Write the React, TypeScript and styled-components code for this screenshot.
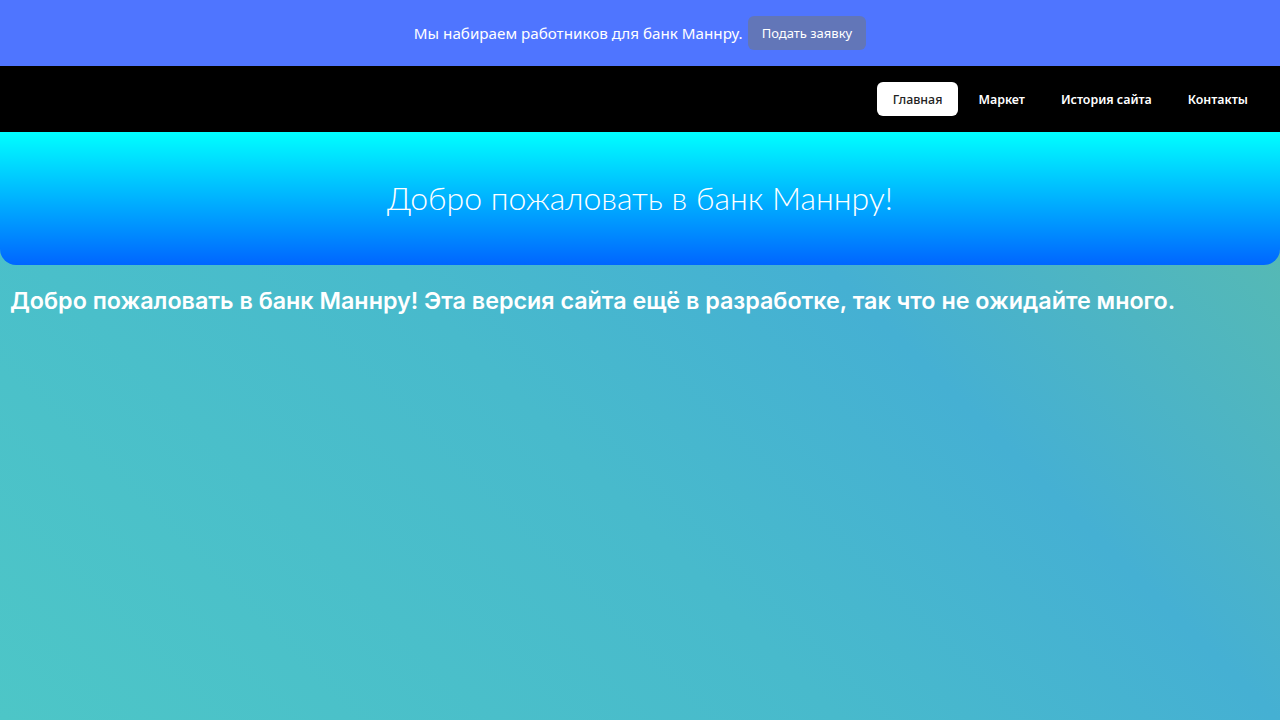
import React from "react";
import styled, { createGlobalStyle } from "styled-components";

const GlobalStyle = createGlobalStyle`
  html, body {
    margin: 0;
    padding: 0;
  }
  body {
    min-height: 100vh;
    font-family: "Noto Sans", "Open Sans", sans-serif;
    background: linear-gradient(225deg, #5ebea4 0%, #45b0d3 36%, #48bacc 58%, #4dc6c7 100%);
    background-attachment: fixed;
  }
`;

const Page = styled.div`
  display: flex;
  flex-direction: column;
  min-height: 100vh;
`;

const Banner = styled.div`
  height: 66px;
  background: #4f75ff;
  display: flex;
  align-items: center;
  justify-content: center;
  gap: 5px;
`;

const BannerText = styled.span`
  color: #ffffff;
  font-family: "Noto Sans", "Open Sans", sans-serif;
  font-size: 15.2px;
`;

const ApplyButton = styled.button`
  height: 34px;
  padding: 0 14px;
  border: none;
  border-radius: 6px;
  background: #6276b8;
  color: #ffffff;
  font-family: "Noto Sans", "Open Sans", sans-serif;
  font-size: 13px;
  cursor: pointer;
`;

const NavBar = styled.nav`
  height: 66px;
  background: #000000;
  display: flex;
  align-items: center;
  justify-content: flex-end;
  gap: 4px;
  padding: 0 16px;
`;

const NavLink = styled.a<{ $active?: boolean }>`
  display: flex;
  align-items: center;
  height: 34px;
  padding: 0 16px;
  border-radius: 6px;
  background: ${(p) => (p.$active ? "#ffffff" : "transparent")};
  color: ${(p) => (p.$active ? "#222222" : "#ffffff")};
  font-family: "Noto Sans", "Open Sans", sans-serif;
  font-size: 12.4px;
  font-weight: ${(p) => (p.$active ? 500 : 600)};
  text-decoration: none;
`;

const Hero = styled.header`
  height: 133px;
  background: linear-gradient(180deg, #00ffff 0%, #0066ff 100%);
  border-radius: 0 0 16px 16px;
  display: flex;
  align-items: center;
  justify-content: center;
`;

const HeroTitle = styled.h1`
  margin: 0 0 3px;
  color: #ffffff;
  font-family: "Lato", sans-serif;
  font-weight: 300;
  font-size: 32px;
`;

const Intro = styled.p`
  margin: 21px 0 0;
  padding: 0 10px;
  color: #ffffff;
  font-family: "Inter", sans-serif;
  font-weight: 600;
  font-size: 23.3px;
`;

export default function App() {
  return (
    <Page>
      <GlobalStyle />
      <Banner>
        <BannerText>Мы набираем работников для банк Маннру.</BannerText>
        <ApplyButton>Подать заявку</ApplyButton>
      </Banner>
      <NavBar>
        <NavLink $active href="#">Главная</NavLink>
        <NavLink href="#">Маркет</NavLink>
        <NavLink href="#">История сайта</NavLink>
        <NavLink href="#">Контакты</NavLink>
      </NavBar>
      <Hero>
        <HeroTitle>Добро пожаловать в банк Маннру!</HeroTitle>
      </Hero>
      <Intro>
        Добро пожаловать в банк Маннру! Эта версия сайта ещё в разработке, так что не ожидайте много.
      </Intro>
    </Page>
  );
}
